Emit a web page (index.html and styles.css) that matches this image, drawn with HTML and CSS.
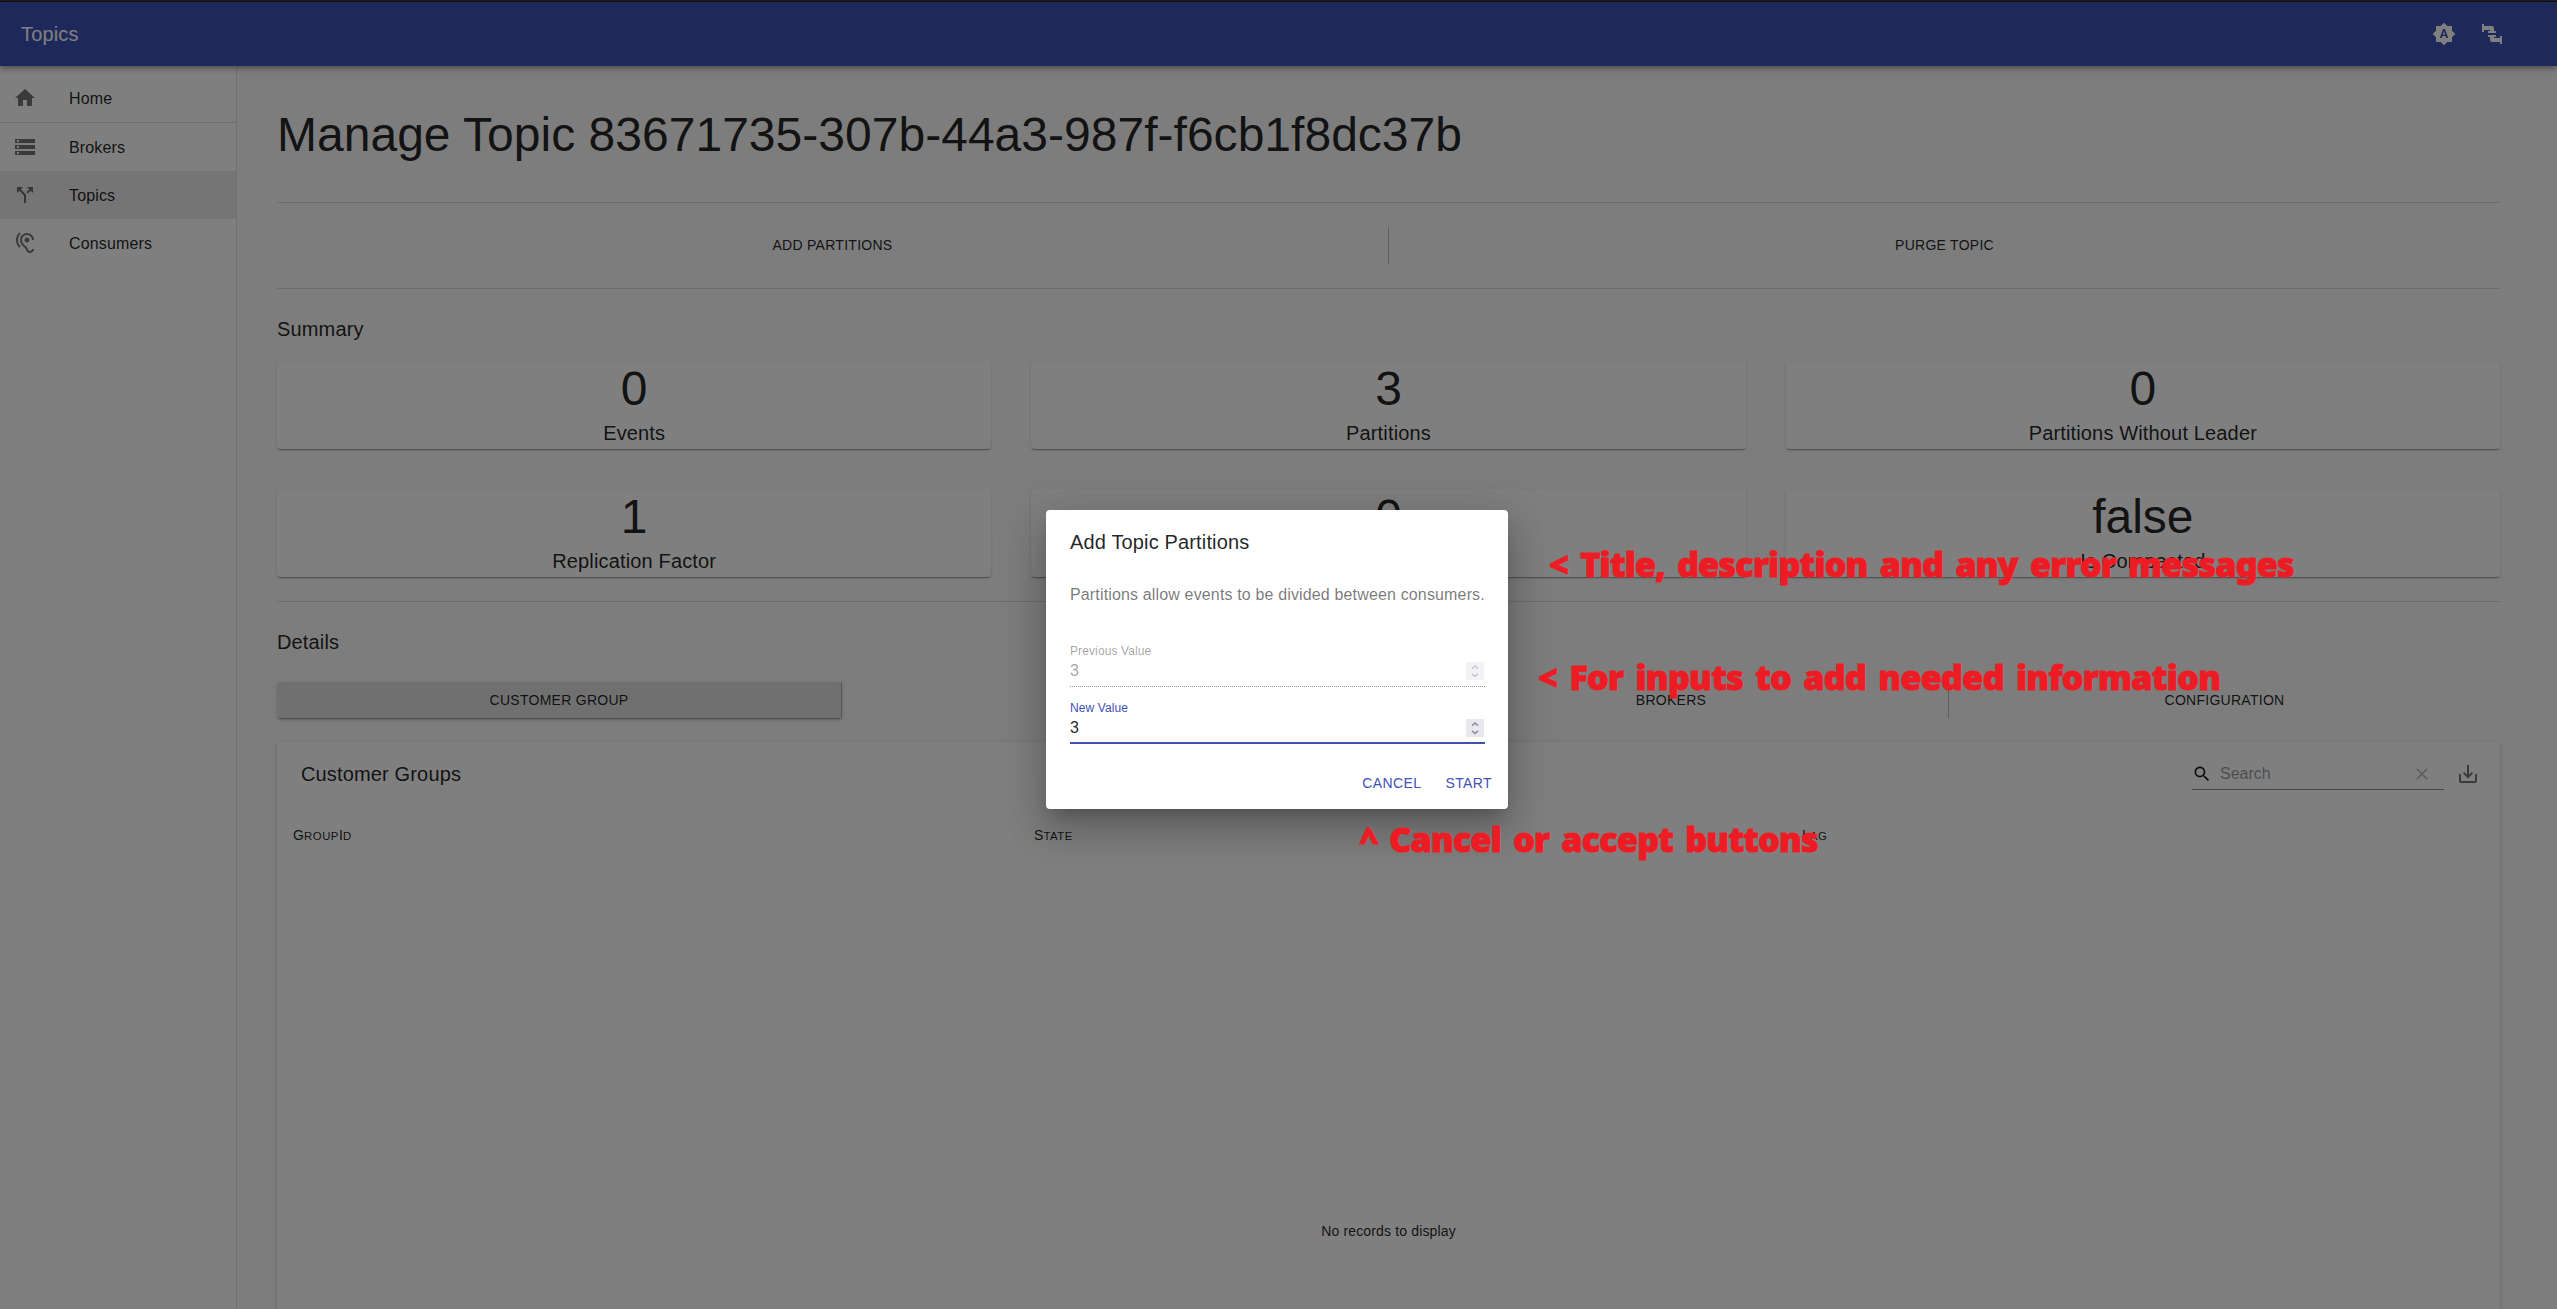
FILE: index.html
```html
<!DOCTYPE html>
<html lang="en">
<head>
<meta charset="utf-8">
<title>Topics</title>
<link rel="stylesheet" href="styles.css">
</head>
<body>
<div class="app">
  <div class="window-edge"></div>
  <header class="appbar">
    <span class="appbar-title">Topics</span>
    <svg class="icon" viewBox="0 0 24 24"><path d="M10.85 12.65h2.3L12 9l-1.15 3.65zM20 8.69V4h-4.69L12 .69 8.69 4H4v4.69L.69 12 4 15.31V20h4.69L12 23.31 15.31 20H20v-4.69L23.31 12 20 8.69zM14.3 16l-.7-2h-3.2l-.7 2H7.8L11 7h2l3.2 9h-1.9z"/></svg>
    <svg class="icon" viewBox="0 0 24 24"><path d="M16,9V11H8V9H10V8H4V10H2V2H4V4H12A2,2 0 0,1 14,6V9H16M10,15V18A2,2 0 0,0 12,20H20V22H22V14H20V16H14V15H16V13H8V15H10Z"/></svg>
  </header>
  <div class="shell">
    <nav class="drawer">
      <a class="nav-item"><svg class="icon" viewBox="0 0 24 24"><path d="M10 20v-6h4v6h5v-8h3L12 3 2 12h3v8z"/></svg><span>Home</span></a>
      <div class="rule"></div>
      <a class="nav-item"><svg class="icon" viewBox="0 0 24 24"><path d="M2 20h20v-4H2v4zm2-3h2v2H4v-2zM2 4v4h20V4H2zm4 3H4V5h2v2zm-4 7h20v-4H2v4zm2-3h2v2H4v-2z"/></svg><span>Brokers</span></a>
      <a class="nav-item selected"><svg class="icon" viewBox="0 0 24 24"><path d="M14 4l2.29 2.29-2.88 2.88 1.42 1.42 2.88-2.88L20 10V4zm-4 0H4v6l2.29-2.29 4.71 4.7V20h2v-8.41l-5.29-5.3z"/></svg><span>Topics</span></a>
      <a class="nav-item"><svg class="icon" viewBox="0 0 24 24"><path d="M17 20c-.29 0-.56-.06-.76-.15-.71-.37-1.21-.88-1.71-2.38-.51-1.56-1.47-2.29-2.39-3-.79-.61-1.61-1.24-2.32-2.53C9.29 10.98 9 9.93 9 9c0-2.8 2.2-5 5-5s5 2.2 5 5h2c0-3.93-3.07-7-7-7S7 5.07 7 9c0 1.26.38 2.65 1.07 3.9.91 1.65 1.98 2.48 2.85 3.15.81.62 1.39 1.07 1.71 2.05.6 1.82 1.37 2.84 2.73 3.55.51.23 1.07.35 1.64.35 2.21 0 4-1.79 4-4h-2c0 1.1-.9 2-2 2zM7.64 2.64L6.22 1.22C4.23 3.21 3 5.96 3 9s1.23 5.79 3.22 7.78l1.41-1.41C6.01 13.74 5 11.49 5 9s1.01-4.74 2.64-6.36zM11.5 9c0 1.38 1.12 2.5 2.5 2.5s2.5-1.12 2.5-2.5-1.12-2.5-2.5-2.5-2.5 1.12-2.5 2.5z"/></svg><span>Consumers</span></a>
    </nav>
    <main class="content">
      <h1>Manage Topic 83671735-307b-44a3-987f-f6cb1f8dc37b</h1>
      <div class="rule"></div>
      <div class="button-group actions">
        <button>Add Partitions</button>
        <button>Purge Topic</button>
      </div>
      <div class="rule"></div>
      <h2 class="summary-title">Summary</h2>
      <section class="cards">
        <div class="card"><b>0</b><span>Events</span></div>
        <div class="card"><b>3</b><span>Partitions</span></div>
        <div class="card"><b>0</b><span>Partitions Without Leader</span></div>
        <div class="card"><b>1</b><span>Replication Factor</span></div>
        <div class="card"><b>0</b><span>Partitions Reassignment</span></div>
        <div class="card"><b>false</b><span>Is Compacted</span></div>
      </section>
      <div class="rule"></div>
      <h2 class="details-title">Details</h2>
      <div class="button-group tabs">
        <button class="active">Customer Group</button>
        <button>Partitions</button>
        <button>Brokers</button>
        <button>Configuration</button>
      </div>
      <section class="table">
        <div class="toolbar">
          <h2>Customer Groups</h2>
          <div class="search">
            <svg class="icon small" viewBox="0 0 24 24"><path d="M15.5 14h-.79l-.28-.27C15.41 12.59 16 11.11 16 9.5 16 5.91 13.09 3 9.5 3S3 5.91 3 9.5 5.91 16 9.5 16c1.61 0 3.09-.59 4.23-1.57l.27.28v.79l5 4.99L20.49 19l-4.99-5zm-6 0C7.01 14 5 11.99 5 9.5S7.01 5 9.5 5 14 7.01 14 9.5 11.99 14 9.5 14z"/></svg>
            <span class="placeholder">Search</span>
            <svg class="icon small clear" viewBox="0 0 24 24"><path d="M19 6.41L17.59 5 12 10.59 6.41 5 5 6.41 10.59 12 5 17.59 6.41 19 12 13.41 17.59 19 19 17.59 13.41 12z"/></svg>
          </div>
          <svg class="icon export" viewBox="0 0 24 24"><path d="M19 12v7H5v-7H3v7c0 1.1.9 2 2 2h14c1.1 0 2-.9 2-2v-7h-2zm-6 .67l2.59-2.58L17 11.5l-5 5-5-5 1.41-1.41L11 12.67V3h2z"/></svg>
        </div>
        <div class="thead"><span>G<small>roup</small>I<small>d</small></span><span>S<small>tate</small></span><span>L<small>ag</small></span></div>
        <div class="empty">No records to display</div>
      </section>
    </main>
  </div>
</div>

<div class="backdrop">
  <div class="dialog">
    <h2>Add Topic Partitions</h2>
    <p>Partitions allow events to be divided between consumers.</p>
    <div class="field disabled">
      <label>Previous Value</label>
      <div class="input"><span>3</span><svg class="spinner" viewBox="0 0 18 18"><path d="M6 6.7L9 4l3 2.7M6 11.8L9 14.5l3-2.7"/></svg></div>
    </div>
    <div class="field focused">
      <label>New Value</label>
      <div class="input"><span>3</span><svg class="spinner" viewBox="0 0 18 18"><path d="M6 6.7L9 4l3 2.7M6 11.8L9 14.5l3-2.7"/></svg></div>
    </div>
    <div class="dialog-actions"><button>Cancel</button><button>Start</button></div>
  </div>
</div>

<div class="note note-title">&lt; Title, description and any error messages</div>
<div class="note note-inputs">&lt; For inputs to add needed information</div>
<div class="note note-buttons">^ Cancel or accept buttons</div>
</body>
</html>
```
FILE: styles.css
```css
* { box-sizing: border-box; }
body {
  margin: 0;
  height: 1309px;
  overflow: hidden;
  background: #fafafa;
  color: rgba(0, 0, 0, .87);
  font: 16px/1.5 "Liberation Sans", Arial, sans-serif;
}
h1, h2, p { margin: 0; font-weight: 400; }
h1 { font-size: 48px; line-height: 56px; letter-spacing: .02px; }
h2 { font-size: 20px; line-height: 32px; letter-spacing: .0075em; }
button {
  border: 0;
  padding: 6px 8px;
  background: none;
  color: inherit;
  font: 14px/24.5px "Liberation Sans", Arial, sans-serif;
  letter-spacing: .27px;
  text-transform: uppercase;
}
.icon { width: 24px; height: 24px; flex: none; fill: currentColor; }
.icon.small { width: 20px; height: 20px; }
.rule { height: 1px; background: rgba(0, 0, 0, .12); }

.app { display: flex; flex-direction: column; height: 1309px; overflow: hidden; isolation: isolate; }
.window-edge { height: 2px; flex: none; background: #3c3c44; border-bottom: 1px solid #202020; }
.appbar {
  display: flex;
  align-items: center;
  gap: 24px;
  flex: none;
  height: 64px;
  padding: 0 53px 0 21px;
  background: #3f51b5;
  color: #fff;
  position: relative;
  z-index: 1;
  box-shadow: 0 2px 4px -1px rgba(0,0,0,.2), 0 4px 5px rgba(0,0,0,.14), 0 1px 10px rgba(0,0,0,.12);
}
.appbar-title { flex: 1; font-size: 20px; letter-spacing: .0075em; }
.shell { display: flex; flex: 1; min-height: 0; }

.drawer { width: 237px; flex: none; padding-top: 8px; background: #fff; border-right: 1px solid rgba(0,0,0,.12); }
.nav-item { display: flex; align-items: center; gap: 32px; height: 48px; padding-left: 13px; letter-spacing: .00938em; }
.nav-item span { padding-top: 2px; }
.nav-item .icon { color: rgba(0,0,0,.54); }
.nav-item.selected { background: rgba(0,0,0,.08); }

.content { flex: 1; padding: 41px 57px 0 40px; }
.content h1 { margin-bottom: 39px; }
.button-group { display: grid; }
.button-group button + button { border-left: 1px solid rgba(0,0,0,.23); }
.actions { grid-template-columns: 1111px 1fr; margin: 24px 0; }
.summary-title { margin: 24px 0 16px; }
.details-title { margin: 24px 0; }

.cards { display: grid; grid-template-columns: repeat(3, 1fr); gap: 40px; margin-bottom: 24px; }
.card {
  display: flex;
  flex-direction: column;
  align-items: center;
  border-radius: 4px;
  background: #fff;
  box-shadow: 0 2px 1px -1px rgba(0,0,0,.2), 0 1px 1px rgba(0,0,0,.14), 0 1px 3px rgba(0,0,0,.12);
}
.card b { font-size: 48px; line-height: 56px; font-weight: 400; }
.card span { font-size: 20px; line-height: 32px; letter-spacing: .0075em; }

.tabs { grid-template-columns: 565px 551px 555px 1fr; margin-bottom: 24px; }
.tabs .active {
  border-right: 1px solid #aeaeae;
  border-radius: 4px 0 0 4px;
  background: #e0e0e0;
  box-shadow: 0 3px 1px -2px rgba(0,0,0,.2), 0 2px 2px rgba(0,0,0,.14), 0 1px 5px rgba(0,0,0,.12);
}
.tabs .active + button { border-left: 0; }

.table {
  height: 700px;
  border-radius: 4px;
  background: #fff;
  box-shadow: 0 3px 1px -2px rgba(0,0,0,.2), 0 2px 2px rgba(0,0,0,.14), 0 1px 5px rgba(0,0,0,.12);
}
.toolbar { display: flex; align-items: center; height: 64px; padding: 0 20px 0 24px; }
.toolbar h2 { flex: 1; }
.search { display: flex; align-items: center; width: 252px; height: 32px; padding-right: 12px; border-bottom: 1px solid rgba(0,0,0,.42); }
.placeholder { flex: 1; padding-left: 8px; color: rgba(0,0,0,.42); }
.clear { color: rgba(0,0,0,.26); }
.export { margin-left: 12px; color: rgba(0,0,0,.54); }
.thead { display: grid; grid-template-columns: 741px 768px 1fr; font-size: 14px; line-height: 24px; letter-spacing: .01071em; }
.thead span { padding: 17px 16px 15px; }
.thead small { font-size: 11.4px; line-height: 1; letter-spacing: .5px; text-transform: uppercase; }
.empty { padding-top: 359px; text-align: center; font-size: 14px; line-height: 20px; letter-spacing: .01071em; }

.backdrop { position: absolute; inset: 0; background: rgba(0,0,0,.5); }
.dialog {
  position: absolute;
  left: 1046px;
  top: 510px;
  width: 462px;
  height: 299px;
  padding: 16px 23px 8px 24px;
  display: flex;
  flex-direction: column;
  border-radius: 4px;
  background: #fff;
  box-shadow: 0 11px 15px -7px rgba(0,0,0,.2), 0 24px 38px 3px rgba(0,0,0,.14), 0 9px 46px 8px rgba(0,0,0,.12);
}
.dialog p { margin: 25px 0 37px; color: rgba(0,0,0,.54); letter-spacing: .00938em; white-space: nowrap; }
.field { height: 43px; margin-bottom: 14px; font-size: 16px; line-height: 19px; }
.field label { display: block; font-size: 12px; line-height: 14px; letter-spacing: .00938em; }
.input { display: flex; justify-content: space-between; align-items: center; height: 29px; padding: 0 1px 2px 0; }
.input span { padding-bottom: 1px; }
.spinner { width: 18px; height: 18px; background: #e9e9ed; fill: none; stroke: #8f8f9d; stroke-width: 1.6; }
.disabled { color: rgba(0,0,0,.38); }
.disabled .input { border-bottom: 1px dotted rgba(0,0,0,.42); }
.disabled .spinner { opacity: .5; }
.focused label { color: #3f51b5; }
.focused .input { border-bottom: 2px solid #3f51b5; }
.dialog-actions { display: flex; justify-content: flex-end; gap: 8px; margin: auto -15px 0 0; color: #3f51b5; }
.dialog-actions button { letter-spacing: .4px; }

.note {
  position: absolute;
  color: #ed1c24;
  font: 900 34px/40px "Noto Sans", "Open Sans", sans-serif;
  letter-spacing: -.75px;
  word-spacing: 4px;
  -webkit-text-stroke: 1px #ed1c24;
  white-space: nowrap;
}
.note-title { left: 1549px; top: 544px; }
.note-inputs { left: 1538px; top: 657px; letter-spacing: -.68px; }
.note-buttons { left: 1360px; top: 819px; }
```
